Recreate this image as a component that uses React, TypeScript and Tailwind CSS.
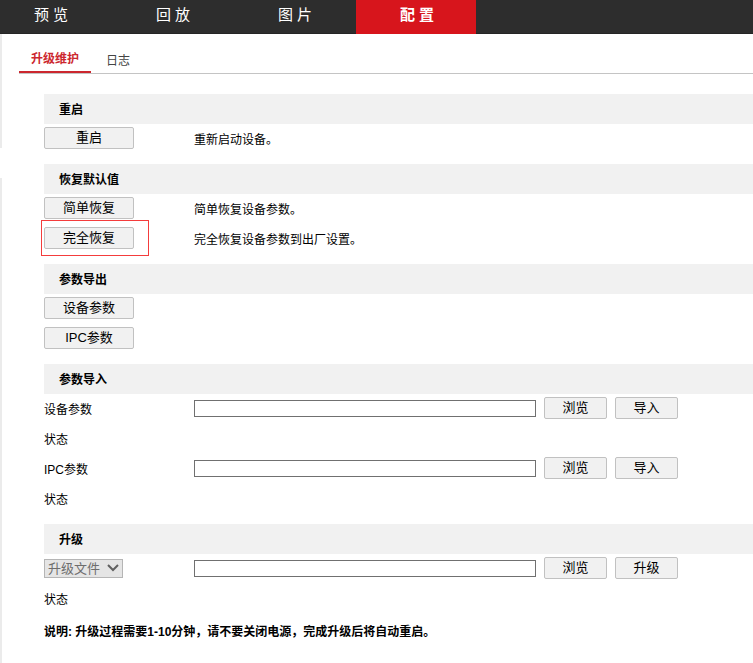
import type { ReactNode } from "react";

const navItems = [
  { label: "预 览", style: "w-[110px] pr-2" },
  { label: "回 放", style: "w-[120px] pl-[2px]" },
  { label: "图 片", style: "w-[120px] pl-[2px]" },
  { label: "配 置", style: "w-[120px] bg-[#d7151c] pl-[2px] font-bold" },
];

function Button({ children, wide = false }: { children: ReactNode; wide?: boolean }) {
  return (
    <button
      type="button"
      className={`h-[22px] shrink-0 rounded-[2px] border border-[#c1c1c1] bg-[#f1f1f1] text-[13px] leading-5 text-black ${
        wide ? "w-[90px]" : "w-[63px]"
      }`}
    >
      {children}
    </button>
  );
}

function Section({ title, children }: { title: string; children: ReactNode }) {
  return (
    <section className="mb-[10px]">
      <h2 className="h-[30px] bg-[#f1f1f1] pl-[15px] text-[12px] leading-8 font-bold">{title}</h2>
      {children}
    </section>
  );
}

function Row({ label, children }: { label: ReactNode; children?: ReactNode }) {
  return (
    <div className="flex h-[30px] items-center pt-[2px]">
      <div className="flex w-[150px] shrink-0 items-center">{label}</div>
      {children}
    </div>
  );
}

function ActionRow({ action, children }: { action: string; children?: ReactNode }) {
  return (
    <Row
      label={
        <div className="mb-1 flex">
          <Button wide>{action}</Button>
        </div>
      }
    >
      {children}
    </Row>
  );
}

function FileFields({ id, name, action }: { id: string; name: string; action: string }) {
  return (
    <div className="mb-1 flex items-center gap-2">
      <input
        id={id}
        type="text"
        aria-label={name}
        className="h-[17px] w-[342px] shrink-0 border border-[#707070] bg-white px-1 text-[12px]"
      />
      <Button>浏览</Button>
      <Button>{action}</Button>
    </div>
  );
}

export default function App() {
  return (
    <div className="flex min-h-screen flex-col overflow-x-hidden bg-white font-['Liberation_Sans','Noto_Sans_CJK_SC',sans-serif] text-[12px] text-black">
      <nav className="flex h-[34px] shrink-0 gap-[2px] border-b border-[#252525] bg-[#2d2d2d]">
        {navItems.map((item) => (
          <a
            key={item.label}
            href="#"
            className={`-mb-px block h-[34px] shrink-0 text-center text-[15px] leading-[30px] text-white ${item.style}`}
          >
            {item.label}
          </a>
        ))}
      </nav>

      <div className="flex grow">
        <aside className="flex w-[2px] shrink-0 flex-col gap-[30px]">
          <div className="h-[114px] bg-[#ebebeb]" />
          <div className="grow bg-[#ebebeb]" />
        </aside>

        <main className="min-w-0 grow pl-[17px]">
          <div className="flex h-[40px] items-end border-b border-[#c4c4c4]">
            <a
              href="#"
              className="h-[26px] w-[72px] border-b-2 border-[#cc272e] text-center leading-6 font-bold text-[#cc272e]"
            >
              升级维护
            </a>
            <a href="#" className="h-[26px] px-[15px] leading-7 text-[#444]">
              日志
            </a>
          </div>

          <div className="pt-5 pl-[25px]">
            <Section title="重启">
              <ActionRow action="重启">重新启动设备。</ActionRow>
            </Section>

            <Section title="恢复默认值">
              <ActionRow action="简单恢复">简单恢复设备参数。</ActionRow>
              <div className="relative">
                <ActionRow action="完全恢复">完全恢复设备参数到出厂设置。</ActionRow>
                <div className="pointer-events-none absolute -top-1 -left-[3px] h-9 w-[108px] border border-[#f43c3c]" />
              </div>
            </Section>

            <Section title="参数导出">
              <ActionRow action="设备参数" />
              <ActionRow action="IPC参数" />
            </Section>

            <Section title="参数导入">
              <Row label={<label htmlFor="device-file">设备参数</label>}>
                <FileFields id="device-file" name="设备参数" action="导入" />
              </Row>
              <Row label="状态" />
              <Row label={<label htmlFor="ipc-file">IPC参数</label>}>
                <FileFields id="ipc-file" name="IPC参数" action="导入" />
              </Row>
              <Row label="状态" />
            </Section>

            <Section title="升级">
              <Row
                label={
                  <div className="relative mb-1 flex">
                    <select
                      disabled
                      aria-label="升级类型"
                      className="h-[19px] w-[79px] appearance-none border border-[#b5b5b5] bg-[#e5e5e5] pl-[3px] text-[13px] leading-[17px] text-[#6d6d6d] opacity-100"
                    >
                      <option>升级文件</option>
                    </select>
                    <svg
                      viewBox="0 0 12 8"
                      className="pointer-events-none absolute top-[5px] right-1 h-2 w-3"
                      fill="none"
                      stroke="#606060"
                      strokeWidth="2"
                    >
                      <path d="M1 1 L6 6 L11 1" />
                    </svg>
                  </div>
                }
              >
                <FileFields id="upgrade-file" name="升级文件" action="升级" />
              </Row>
              <Row label="状态" />
            </Section>

            <p className="leading-4 font-bold">说明: 升级过程需要1-10分钟，请不要关闭电源，完成升级后将自动重启。</p>
          </div>
        </main>
      </div>
    </div>
  );
}
